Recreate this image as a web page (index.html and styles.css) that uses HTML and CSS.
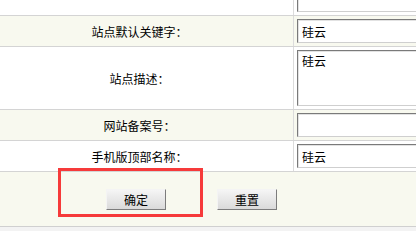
FILE: index.html
```html
<!DOCTYPE html>
<html lang="zh-CN">
  <head>
    <meta charset="UTF-8" />
    <title>站点设置</title>
    <link rel="stylesheet" href="styles.css">
  </head>
  <body>
    <div class="form-table">
      <div class="form-row tall">
        <div class="label">站点版权：</div>
        <div class="field"><textarea></textarea></div>
      </div>
      <div class="form-row alt">
        <div class="label">站点默认关键字：</div>
        <div class="field"><input type="text" value="硅云" /></div>
      </div>
      <div class="form-row tall">
        <div class="label">站点描述：</div>
        <div class="field"><textarea>硅云</textarea></div>
      </div>
      <div class="form-row alt">
        <div class="label">网站备案号：</div>
        <div class="field"><input type="text" value="" /></div>
      </div>
      <div class="form-row">
        <div class="label">手机版顶部名称：</div>
        <div class="field"><input type="text" value="硅云" /></div>
      </div>
      <div class="form-actions">
        <div class="highlight"></div>
        <button type="submit">确定</button>
        <button type="reset">重置</button>
      </div>
    </div>
  </body>
</html>
```

FILE: styles.css
```css
* {
  margin: 0;
  padding: 0;
  box-sizing: border-box;
}

body {
  font-family: "Noto Sans CJK SC", "Liberation Sans", sans-serif;
  font-size: 12px;
  color: #000;
  background: #f3f3f3;
  overflow: hidden;
}

/* 表单表格 */
.form-table {
  margin-top: -47px;
  width: 100%;
}

.form-row {
  display: grid;
  grid-template-columns: 294px 1fr;
  height: 31px;
  background: #fff;
  border-bottom: 1px solid #d4d4d4;
}

.form-row.alt {
  background: #f8f9ef;
}

.form-row.tall {
  height: 63px;
}

.label {
  display: flex;
  align-items: center;
  justify-content: center;
  padding-right: 14px;
  border-right: 1px solid #dcdcdc;
}

.field {
  padding: 3px 0 0 3px;
  overflow: hidden;
}

.field input,
.field textarea {
  display: block;
  width: 200px;
  height: 24px;
  padding: 0 4px;
  font-family: inherit;
  font-size: 12px;
  color: #000;
  background: #fff;
  border: 1px solid;
  border-color: #7a7a7a #cfcfcf #cfcfcf #7a7a7a;
  box-shadow: inset 1px 1px 0 #e2e2e2;
  outline: none;
}

.field textarea {
  height: 56px;
  padding-top: 2px;
  resize: none;
  line-height: 16px;
}

/* 按钮 */
.form-actions {
  position: relative;
  display: flex;
  align-items: center;
  gap: 51px;
  height: 55px;
  padding-left: 106px;
  background: #f8f9ef;
  border-bottom: 1px solid #d0d0d0;
}

.form-actions button {
  width: 60px;
  height: 21px;
  font-family: inherit;
  font-size: 12px;
  color: #000;
  background: linear-gradient(#f5f5f5, #dadada);
  border: 1px solid;
  border-color: #f4f4f4 #7c7c7c #7c7c7c #f4f4f4;
}

.highlight {
  position: absolute;
  left: 58px;
  top: -4px;
  width: 145px;
  height: 49px;
  border: 3px solid #f63a3a;
}
```
